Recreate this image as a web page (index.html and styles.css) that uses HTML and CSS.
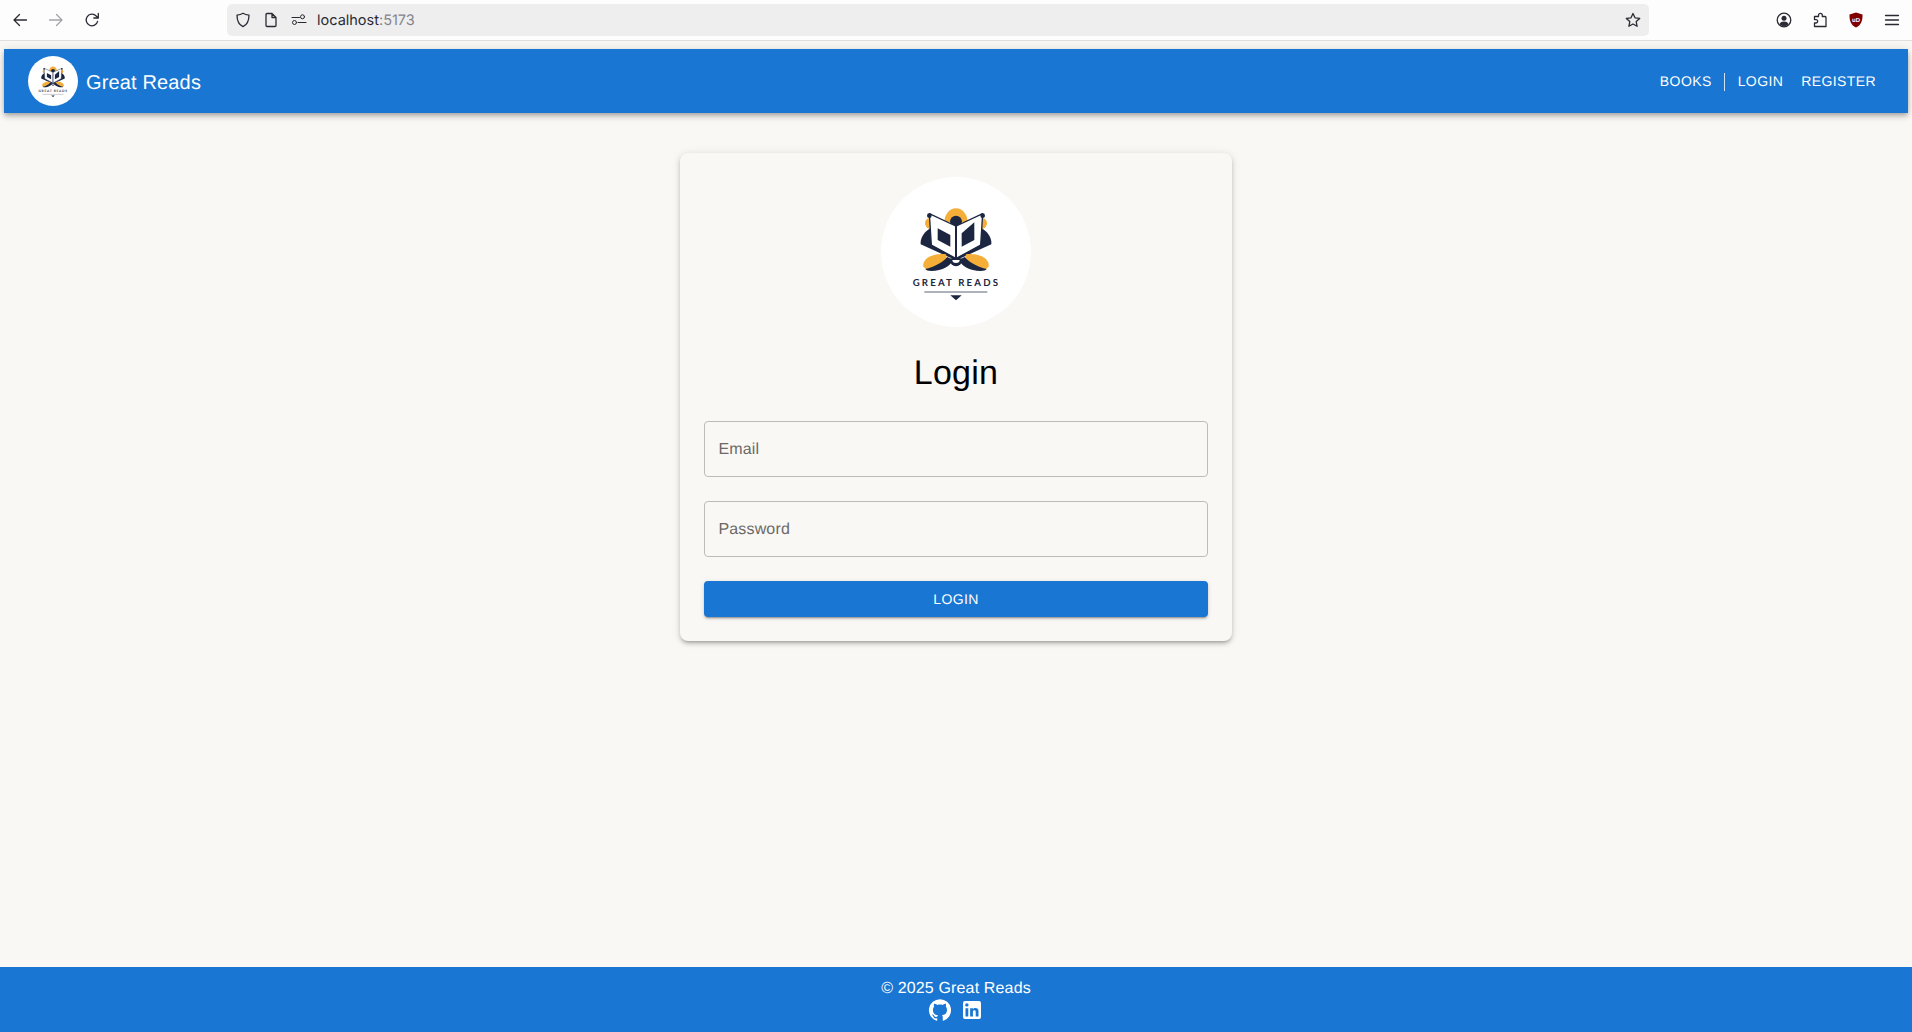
FILE: index.html
```html
<!DOCTYPE html>
<html lang="en">
<head>
<meta charset="utf-8">
<title>Great Reads</title>
<link rel="stylesheet" href="styles.css">
</head>
<body>
<header class="browser">
  <div class="tool">
    <svg viewBox="0 0 16 16" class="ico"><path d="M14.500 8H2M7.500 2.500L2 8l5.500 5.500"/></svg>
  </div>
  <div class="tool faded">
    <svg viewBox="0 0 16 16" class="ico"><path d="M1.500 8H14M8.500 2.500L14 8l-5.500 5.500"/></svg>
  </div>
  <div class="tool">
    <svg viewBox="0 0 16 16" class="ico"><path d="M13.600 9.300A5.800 5.800 0 1 1 12.200 4L14 5.800M14.300 1.500v4.500H9.800"/></svg>
  </div>
  <div class="urlbar">
    <svg viewBox="0 0 16 16" class="ico url-ico"><path d="M8 1.300c2 1.300 4 1.700 6 1.800 0 6-1.700 9.800-6 11.600C3.700 12.900 2 9.100 2 3.100c2-.1 4-.5 6-1.800z"/></svg>
    <svg viewBox="0 0 16 16" class="ico url-ico"><path d="M3 2.500a1 1 0 0 1 1-1h5l4 4v8a1 1 0 0 1-1 1H4a1 1 0 0 1-1-1zM9 1.500v4h4"/></svg>
    <svg viewBox="0 0 16 16" class="ico url-ico thin"><path d="M1 5.500h7.500M7 10.500H15"/><circle cx="11.500" cy="4.800" r="2"/><circle cx="3.500" cy="10.500" r="2"/></svg>
    <span class="address">localhost<span class="port">:5173</span></span>
    <svg viewBox="0 0 16 16" class="ico star"><path d="M8 1.500l2 4.300 4.700.6-3.500 3.200.9 4.700L8 12l-4.100 2.300.9-4.700-3.500-3.200 4.700-.6z"/></svg>
  </div>
  <div class="tool first-right">
    <svg viewBox="0 0 16 16" class="ico"><circle cx="8" cy="8" r="6.800"/><circle class="solid" cx="8" cy="6.300" r="2.500"/><path class="solid" d="M3.500 12c.8-1.700 2.500-2.500 4.500-2.500s3.700.8 4.500 2.500c-1 1.300-2.700 2.200-4.500 2.200S4.500 13.300 3.500 12z"/></svg>
  </div>
  <div class="tool">
    <svg viewBox="0 0 16 16" class="ico"><path d="M2.500 14.500V11H4a1.700 1.700 0 0 0 0-3.400H2.500V4.500h4V3.200a1.900 1.900 0 0 1 3.800 0v1.300H13a1 1 0 0 1 1 1v9z"/></svg>
  </div>
  <div class="tool">
    <svg viewBox="0 0 16 16" class="ublock"><path d="M8 .5l6.500 2c.2 6.500-1.500 10.700-6.500 13C3 13.200 1.300 9 1.500 2.500z" fill="#800000"/><text class="ub-text" x="8" y="10">uD</text></svg>
  </div>
  <div class="tool">
    <svg viewBox="0 0 16 16" class="ico"><path d="M1.500 3.500h13M1.500 8h13M1.500 12.500h13"/></svg>
  </div>
</header>

<div class="page">
  <nav class="appbar">
    <div class="brand">
      <svg class="brand-logo" viewBox="63 36 450 450">
        <circle cx="288" cy="261" r="225" fill="#fff"/>
        <path d="M253 172a35 42 0 0 1 70 0z" fill="#f5ae37"/>
        <circle cx="288" cy="170" r="18" fill="#1c2640"/>
        <circle cx="212" cy="175" r="17" fill="#f5ae37"/>
        <circle cx="364" cy="175" r="17" fill="#f5ae37"/>
        <path d="M212 190C192 200 180 220 182 238L286 285V195z" fill="#1c2640"/>
        <path d="M364 190C384 200 396 220 394 238L290 285V195z" fill="#1c2640"/>
        <path d="M190 304C186 280 222 262 258 268L262 285 200 316z" fill="#f5ae37"/>
        <path d="M386 304C390 280 354 262 318 268L314 285 376 316z" fill="#f5ae37"/>
        <path d="M196 312C220 306 246 294 262 276L278 284C276 300 246 318 214 318 204 318 198 316 196 312z" fill="#1c2640"/>
        <path d="M380 312C356 306 330 294 314 276L298 284C300 300 330 318 362 318 372 318 378 316 380 312z" fill="#1c2640"/>
        <path d="M269 282a19 22 0 0 0 38 0l-10-4h-18z" fill="#1c2640"/>
        <path d="M277 285a11 9 0 0 0 22 0z" fill="#fff"/>
        <path d="M208 146L287 183V280L214 240z" fill="#fff" stroke="#1c2640" stroke-width="4" stroke-linejoin="round"/>
        <path d="M368 146L289 183V280L362 240z" fill="#fff" stroke="#1c2640" stroke-width="4" stroke-linejoin="round"/>
        <path d="M233 190L271 210V245L233 225z" fill="#1c2640"/>
        <path d="M305 205L343 172V225L305 245z" fill="#1c2640"/>
        <circle cx="208" cy="152" r="7" fill="#1c2640"/>
        <circle cx="368" cy="152" r="7" fill="#1c2640"/>
        <text class="logo-word" x="158" y="364" textLength="256">GREAT READS</text>
        <path d="M193 381H382" stroke="#5d6474" stroke-width="3"/>
        <path d="M271 391H305L288 406z" fill="#1c2640"/>
      </svg>
      <span class="brand-name">Great Reads</span>
    </div>
    <div class="nav-links">
      <a class="nav-btn">Books</a>
      <span class="nav-divider"></span>
      <a class="nav-btn">Login</a>
      <a class="nav-btn register">Register</a>
    </div>
  </nav>

  <main class="content">
    <form class="card">
      <svg class="card-logo" viewBox="63 36 450 450">
        <circle cx="288" cy="261" r="225" fill="#fff"/>
        <path d="M253 172a35 42 0 0 1 70 0z" fill="#f5ae37"/>
        <circle cx="288" cy="170" r="18" fill="#1c2640"/>
        <circle cx="212" cy="175" r="17" fill="#f5ae37"/>
        <circle cx="364" cy="175" r="17" fill="#f5ae37"/>
        <path d="M212 190C192 200 180 220 182 238L286 285V195z" fill="#1c2640"/>
        <path d="M364 190C384 200 396 220 394 238L290 285V195z" fill="#1c2640"/>
        <path d="M190 304C186 280 222 262 258 268L262 285 200 316z" fill="#f5ae37"/>
        <path d="M386 304C390 280 354 262 318 268L314 285 376 316z" fill="#f5ae37"/>
        <path d="M196 312C220 306 246 294 262 276L278 284C276 300 246 318 214 318 204 318 198 316 196 312z" fill="#1c2640"/>
        <path d="M380 312C356 306 330 294 314 276L298 284C300 300 330 318 362 318 372 318 378 316 380 312z" fill="#1c2640"/>
        <path d="M269 282a19 22 0 0 0 38 0l-10-4h-18z" fill="#1c2640"/>
        <path d="M277 285a11 9 0 0 0 22 0z" fill="#fff"/>
        <path d="M208 146L287 183V280L214 240z" fill="#fff" stroke="#1c2640" stroke-width="4" stroke-linejoin="round"/>
        <path d="M368 146L289 183V280L362 240z" fill="#fff" stroke="#1c2640" stroke-width="4" stroke-linejoin="round"/>
        <path d="M233 190L271 210V245L233 225z" fill="#1c2640"/>
        <path d="M305 205L343 172V225L305 245z" fill="#1c2640"/>
        <circle cx="208" cy="152" r="7" fill="#1c2640"/>
        <circle cx="368" cy="152" r="7" fill="#1c2640"/>
        <text class="logo-word" x="158" y="364" textLength="256">GREAT READS</text>
        <path d="M193 381H382" stroke="#5d6474" stroke-width="3"/>
        <path d="M271 391H305L288 406z" fill="#1c2640"/>
      </svg>
      <h1 class="title">Login</h1>
      <div class="field"><span class="placeholder">Email</span></div>
      <div class="field"><span class="placeholder">Password</span></div>
      <div class="submit">Login</div>
    </form>
  </main>

  <footer class="footer">
    <div class="copy">© 2025 Great Reads</div>
    <div class="socials">
      <svg viewBox="0 0 24 24" class="social"><path d="M12 1.270a11 11 0 00-3.480 21.460c.550.090.730-.280.730-.550v-1.840c-3.030.640-3.670-1.460-3.670-1.460-.550-1.290-1.280-1.650-1.280-1.650-.920-.650.100-.650.100-.650 1.100 0 1.730 1.100 1.730 1.100.920 1.650 2.570 1.200 3.210.920a2 2 0 01.640-1.470c-2.470-.270-5.040-1.190-5.040-5.500 0-1.100.460-2.100 1.200-2.840a3.760 3.760 0 010-2.930s.910-.280 3.110 1.100c1.800-.490 3.700-.490 5.500 0 2.100-1.380 3.020-1.100 3.020-1.100a3.760 3.760 0 010 2.930c.830.740 1.200 1.740 1.200 2.940 0 4.210-2.570 5.130-5.040 5.400.450.370.820.920.820 2.020v3.030c0 .270.100.640.730.550A11 11 0 0012 1.270"/></svg>
      <svg viewBox="0 0 24 24" class="social"><path d="M19 3a2 2 0 0 1 2 2v14a2 2 0 0 1-2 2H5a2 2 0 0 1-2-2V5a2 2 0 0 1 2-2h14m-.5 15.500v-5.300a3.260 3.260 0 0 0-3.260-3.260c-.850 0-1.840.520-2.320 1.300v-1.110h-2.790v8.370h2.790v-4.930c0-.770.620-1.400 1.390-1.400a1.400 1.400 0 0 1 1.400 1.400v4.930h2.790M6.880 8.560a1.680 1.680 0 0 0 1.680-1.680c0-.930-.750-1.690-1.680-1.690a1.690 1.690 0 0 0-1.690 1.690c0 .930.760 1.680 1.690 1.680m1.390 9.940v-8.370H5.500v8.370h2.770z"/></svg>
    </div>
  </footer>
</div>
</body>
</html>
```

FILE: styles.css
```css
* { box-sizing: border-box; }
html, body { margin: 0; height: 100%; }
body {
  width: 1912px;
  height: 1032px;
  overflow: hidden;
  display: flex;
  flex-direction: column;
  background: #faf8f5;
  font-family: "Liberation Sans", Arial, sans-serif;
  color: #000;
  text-rendering: geometricPrecision;
}

/* Browser chrome */
.browser {
  flex: none;
  height: 41px;
  display: flex;
  align-items: center;
  padding: 0 2px 1px;
  background: #fdfdfd;
  border-bottom: 1px solid #dfdfdf;
}
.tool {
  width: 36px;
  height: 36px;
  display: flex;
  align-items: center;
  justify-content: center;
  flex: none;
}
.tool.faded { opacity: .42; }
.ico {
  width: 16px;
  height: 16px;
  fill: none;
  stroke: #2b2a33;
  stroke-width: 1.300;
  stroke-linecap: round;
  stroke-linejoin: round;
}
.ico .solid { fill: #2b2a33; stroke: none; }
.urlbar {
  width: 1422px;
  height: 32px;
  margin-left: 117px;
  padding: 0 8px;
  display: flex;
  align-items: center;
  gap: 12px;
  background: #eeeeee;
  border-radius: 5px;
  flex: none;
}
.url-ico { flex: none; }
.url-ico.thin { stroke-width: 1; }
.address {
  font-family: "Inter", sans-serif;
  font-size: 14.500px;
  color: #2b2a33;
  margin-left: -2px;
  padding-top: 2px;
}
.port { color: #85848b; }
.star { margin-left: auto; }
.first-right { margin-left: auto; }
.ublock { width: 16px; height: 16px; }
.ub-text {
  font-family: "Liberation Sans", sans-serif;
  font-size: 6px;
  font-weight: 700;
  fill: #fff;
  text-anchor: middle;
}

/* Page */
.page {
  flex: 1;
  min-height: 0;
  display: flex;
  flex-direction: column;
}
.appbar {
  flex: none;
  height: 64px;
  margin: 8px 4px 0;
  padding: 0 24px;
  display: flex;
  align-items: center;
  justify-content: space-between;
  background: #1976d2;
  color: #fff;
  box-shadow: 0 2px 4px -1px rgba(0,0,0,.2), 0 4px 5px rgba(0,0,0,.14), 0 1px 10px rgba(0,0,0,.12);
}
.brand { display: flex; align-items: center; gap: 8px; }
.brand-logo { width: 50px; height: 50px; display: block; }
.brand-name { font-size: 20px; line-height: 32px; letter-spacing: .15px; padding-top: 3px; }
.nav-links { display: flex; align-items: center; padding-top: 1px; }
.nav-btn {
  padding: 6px 8px;
  font-size: 14px;
  line-height: 24.500px;
  letter-spacing: .4px;
  text-transform: uppercase;
}
.nav-btn.register { margin-left: 2px; }
.nav-divider {
  width: 1px;
  height: 18px;
  margin: 0 5px 0 4px;
  background: rgba(255,255,255,.8);
}

.content {
  flex: 1;
  min-height: 0;
  display: flex;
  justify-content: center;
  align-items: flex-start;
  padding-top: 40px;
}
.card {
  width: 552px;
  padding: 24px;
  display: flex;
  flex-direction: column;
  background: #faf8f5;
  border-radius: 8px;
  box-shadow: 0 3px 3px -2px rgba(0,0,0,.2), 0 3px 4px rgba(0,0,0,.14), 0 1px 8px rgba(0,0,0,.12);
}
.card-logo { width: 150px; height: 150px; align-self: center; display: block; }
.title {
  margin: 25px 0 27px;
  height: 42px;
  font-size: 34px;
  line-height: 42px;
  font-weight: 400;
  text-align: center;
  letter-spacing: .25px;
}
.field {
  height: 56px;
  margin-bottom: 24px;
  padding: 2px 13.500px 0;
  display: flex;
  align-items: center;
  border: 1px solid #bdbcb9;
  border-radius: 4px;
}
.placeholder { font-size: 16px; letter-spacing: .15px; color: #6b6a68; }
.submit {
  height: 36px;
  display: flex;
  align-items: center;
  justify-content: center;
  background: #1976d2;
  color: #fff;
  border-radius: 4px;
  font-size: 14px;
  letter-spacing: .4px;
  text-transform: uppercase;
  box-shadow: 0 3px 1px -2px rgba(0,0,0,.2), 0 2px 2px rgba(0,0,0,.14), 0 1px 5px rgba(0,0,0,.12);
}

.footer {
  flex: none;
  height: 65px;
  padding-top: 10px;
  background: #1976d2;
  color: #fff;
  text-align: center;
}
.copy { font-size: 16px; line-height: 24px; letter-spacing: .15px; }
.socials { display: flex; justify-content: center; gap: 8px; margin-top: -3px; }
.social { width: 24px; height: 24px; fill: #fff; display: block; }
.logo-word {
  font-family: "Lato", sans-serif;
  font-size: 29px;
  font-weight: 700;
  fill: #1c2640;
}
```
